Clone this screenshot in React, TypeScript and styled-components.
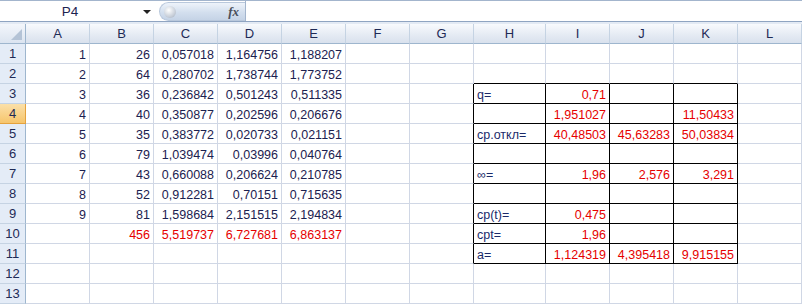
import React from 'react';
import styled, { createGlobalStyle } from 'styled-components';

const GlobalStyle = createGlobalStyle`
  html, body {
    margin: 0;
    padding: 0;
    background: #ffffff;
    overflow: hidden;
  }
  * {
    box-sizing: border-box;
  }
`;

const COLS = ['A', 'B', 'C', 'D', 'E', 'F', 'G', 'H', 'I', 'J', 'K', 'L'];
const ROWS = 13;

interface CellData {
  v: string;
  red?: boolean;
  text?: boolean;
}

const cells: Record<string, CellData> = {
  A1: { v: '1' }, B1: { v: '26' }, C1: { v: '0,057018' }, D1: { v: '1,164756' }, E1: { v: '1,188207' },
  A2: { v: '2' }, B2: { v: '64' }, C2: { v: '0,280702' }, D2: { v: '1,738744' }, E2: { v: '1,773752' },
  A3: { v: '3' }, B3: { v: '36' }, C3: { v: '0,236842' }, D3: { v: '0,501243' }, E3: { v: '0,511335' },
  A4: { v: '4' }, B4: { v: '40' }, C4: { v: '0,350877' }, D4: { v: '0,202596' }, E4: { v: '0,206676' },
  A5: { v: '5' }, B5: { v: '35' }, C5: { v: '0,383772' }, D5: { v: '0,020733' }, E5: { v: '0,021151' },
  A6: { v: '6' }, B6: { v: '79' }, C6: { v: '1,039474' }, D6: { v: '0,03996' }, E6: { v: '0,040764' },
  A7: { v: '7' }, B7: { v: '43' }, C7: { v: '0,660088' }, D7: { v: '0,206624' }, E7: { v: '0,210785' },
  A8: { v: '8' }, B8: { v: '52' }, C8: { v: '0,912281' }, D8: { v: '0,70151' }, E8: { v: '0,715635' },
  A9: { v: '9' }, B9: { v: '81' }, C9: { v: '1,598684' }, D9: { v: '2,151515' }, E9: { v: '2,194834' },
  B10: { v: '456', red: true }, C10: { v: '5,519737', red: true }, D10: { v: '6,727681', red: true }, E10: { v: '6,863137', red: true },

  H3: { v: 'q=', text: true }, I3: { v: '0,71', red: true },
  I4: { v: '1,951027', red: true }, K4: { v: '11,50433', red: true },
  H5: { v: 'ср.откл=', text: true }, I5: { v: '40,48503', red: true }, J5: { v: '45,63283', red: true }, K5: { v: '50,03834', red: true },
  H7: { v: '∞=', text: true }, I7: { v: '1,96', red: true }, J7: { v: '2,576', red: true }, K7: { v: '3,291', red: true },
  H9: { v: 'ср(t)=', text: true }, I9: { v: '0,475', red: true },
  H10: { v: 'срt=', text: true }, I10: { v: '1,96', red: true },
  H11: { v: 'а=', text: true }, I11: { v: '1,124319', red: true }, J11: { v: '4,395418', red: true }, K11: { v: '9,915155', red: true },
};

const inBox = (ci: number, r: number) => ci >= 7 && ci <= 10 && r >= 3 && r <= 11;

const Page = styled.div`
  width: 802px;
  height: 306px;
  background: #ffffff;
  font-family: 'Liberation Sans', Arial, sans-serif;
  overflow: hidden;
`;

const FormulaBar = styled.div`
  display: flex;
  align-items: stretch;
  height: 22px;
  border-top: 1px solid #a3b5cd;
  border-bottom: 1px solid #8fa4c1;
  background: #ffffff;
`;

const NameBox = styled.div`
  position: relative;
  width: 155px;
  display: flex;
  align-items: center;
  justify-content: center;
  padding-right: 15px;
  font-size: 13.5px;
  color: #1c2350;
`;

const DropArrow = styled.span`
  position: absolute;
  right: 4px;
  top: 9px;
  width: 0;
  height: 0;
  border-left: 4px solid transparent;
  border-right: 4px solid transparent;
  border-top: 4px solid #222;
`;

const Pill = styled.div`
  width: 86px;
  margin: 1px 0 0 4px;
  height: 19px;
  border-radius: 10px 0 0 10px;
  border: 1px solid #b9c8dc;
  border-right: none;
  background: linear-gradient(#eef3fa, #d3dfee 55%, #c5d3e6);
  display: flex;
  align-items: center;
  justify-content: space-between;
  padding: 0 6px 0 4px;
`;

const Knob = styled.span`
  width: 12px;
  height: 12px;
  border-radius: 50%;
  background: radial-gradient(circle at 40% 35%, #ffffff, #c9d0da 60%, #9ea9b8);
`;

const Fx = styled.span`
  font-family: 'Liberation Serif', 'Times New Roman', serif;
  font-style: italic;
  font-weight: bold;
  font-size: 13px;
  color: #4a4f5a;
`;

const FormulaInput = styled.div`
  flex: 1;
  border-left: 1px solid #a3b5cd;
  background: #ffffff;
`;

const Gap = styled.div`
  height: 2px;
  background: #e3eaf4;
`;

const Sheet = styled.div`
  display: grid;
  grid-template-columns: 26px repeat(7, 64px) 72px repeat(4, 64px);
  grid-auto-rows: 20px;
`;

const Corner = styled.div`
  position: relative;
  background: linear-gradient(#f3f6fb, #dbe4f0);
  border-right: 1px solid #9eb6ce;
  border-bottom: 1px solid #9eb6ce;
  &::after {
    content: '';
    position: absolute;
    right: 3px;
    bottom: 3px;
    width: 0;
    height: 0;
    border-left: 11px solid transparent;
    border-bottom: 11px solid #b4c3d6;
  }
`;

const ColHeader = styled.div`
  display: flex;
  align-items: center;
  justify-content: center;
  background: linear-gradient(#f8fafd, #e4eaf3 60%, #d9e1ed);
  border-right: 1px solid #c5d3e3;
  border-bottom: 1px solid #9eb6ce;
  font-size: 13px;
  color: #1e2a55;
`;

const RowHeader = styled.div<{ $active?: boolean }>`
  display: flex;
  align-items: center;
  justify-content: center;
  background: ${(p) => (p.$active ? 'linear-gradient(#fbe0a9, #f6c56c)' : '#e4ecf7')};
  border-right: 1px solid ${(p) => (p.$active ? '#e4a23e' : '#9eb6ce')};
  border-bottom: 1px solid ${(p) => (p.$active ? '#e4a23e' : '#c5d3e3')};
  font-size: 13px;
  color: #1e2a55;
`;

const Cell = styled.div<{ $red?: boolean; $text?: boolean; $rb?: boolean; $bb?: boolean }>`
  display: flex;
  align-items: center;
  justify-content: ${(p) => (p.$text ? 'flex-start' : 'flex-end')};
  padding: 2px 3px 0 3px;
  border-right: 1px solid ${(p) => (p.$rb ? '#000000' : '#d0d7e5')};
  border-bottom: 1px solid ${(p) => (p.$bb ? '#000000' : '#d0d7e5')};
  font-size: 12.5px;
  color: ${(p) => (p.$red ? '#e60000' : p.$text ? '#1a2a6a' : '#1b2150')};
  white-space: nowrap;
  overflow: hidden;
`;

export default function App() {
  const rows = Array.from({ length: ROWS }, (_, i) => i + 1);
  return (
    <Page>
      <GlobalStyle />
      <FormulaBar>
        <NameBox>
          P4
          <DropArrow />
        </NameBox>
        <Pill>
          <Knob />
          <Fx>fx</Fx>
        </Pill>
        <FormulaInput />
      </FormulaBar>
      <Gap />
      <Sheet>
        <Corner />
        {COLS.map((c) => (
          <ColHeader key={c}>{c}</ColHeader>
        ))}
        {rows.map((r) => (
          <React.Fragment key={r}>
            <RowHeader $active={r === 4}>{r}</RowHeader>
            {COLS.map((c, ci) => {
              const d = cells[`${c}${r}`];
              const rb = inBox(ci, r) || inBox(ci + 1, r);
              const bb = inBox(ci, r) || inBox(ci, r + 1);
              return (
                <Cell key={c} $red={d?.red} $text={d?.text} $rb={rb} $bb={bb}>
                  {d?.v}
                </Cell>
              );
            })}
          </React.Fragment>
        ))}
      </Sheet>
    </Page>
  );
}
